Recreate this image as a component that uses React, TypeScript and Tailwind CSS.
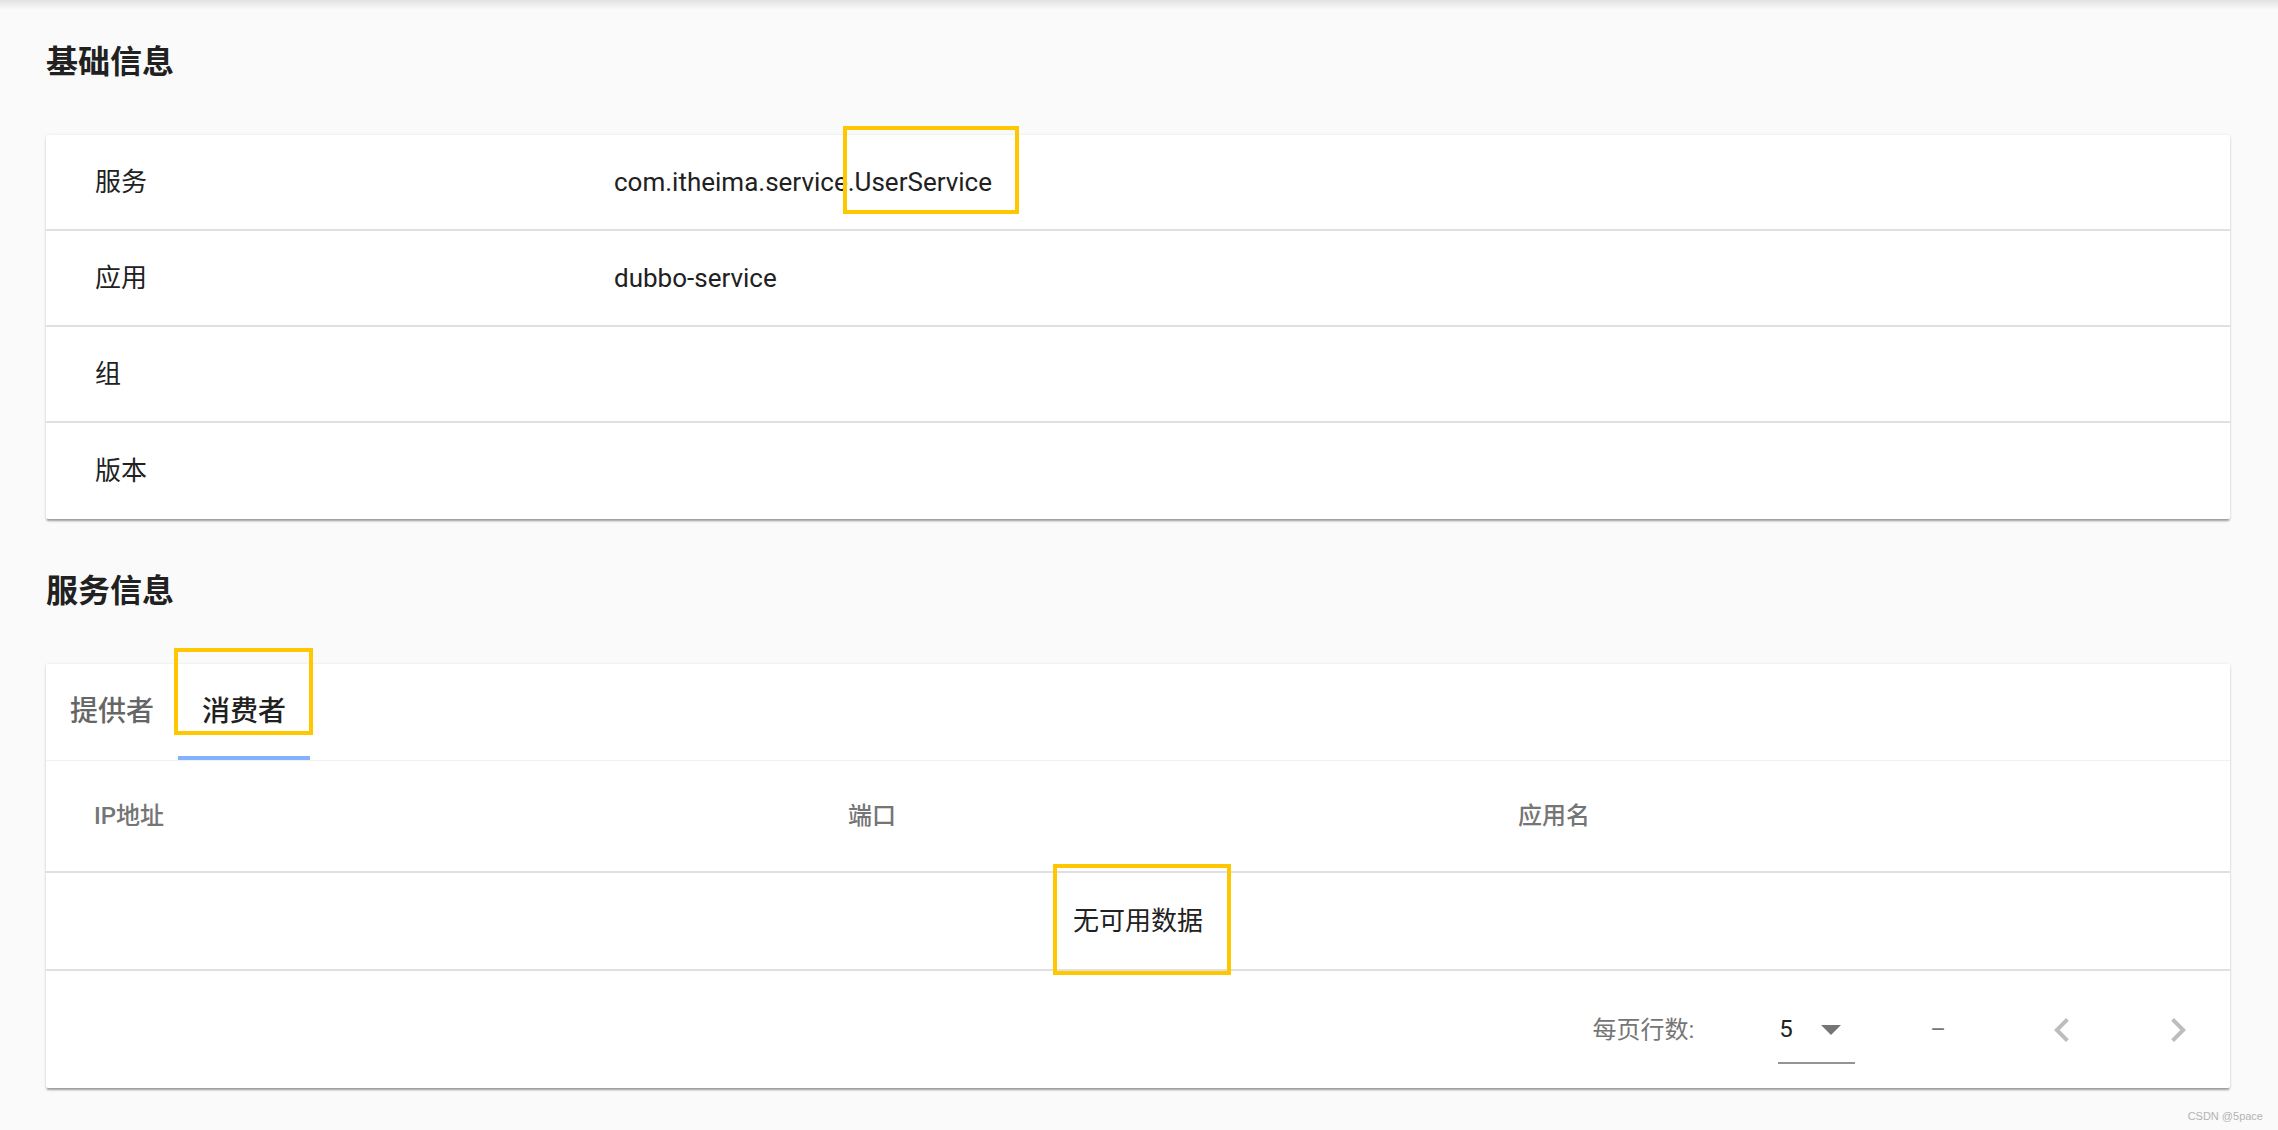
import React from "react"

const INFO_ROWS = [
  { label: "服务", value: "com.itheima.service.UserService" },
  { label: "应用", value: "dubbo-service" },
  { label: "组", value: "" },
  { label: "版本", value: "" },
]

const TABS = ["提供者", "消费者"]

const cardShadow =
  "shadow-[0_3px_2px_-1px_rgba(0,0,0,0.28),0_2px_3px_0_rgba(0,0,0,0.12),0_0_3px_0_rgba(0,0,0,0.08)]"

const ChevronLeft = () => (
  <svg width="48" height="48" viewBox="0 0 24 24" fill="#bdbdbd">
    <path d="M15.41 7.41L14 6l-6 6 6 6 1.41-1.41L10.83 12z" />
  </svg>
)

const ChevronRight = () => (
  <svg width="48" height="48" viewBox="0 0 24 24" fill="#bdbdbd">
    <path d="M10 6L8.59 7.41 13.17 12l-4.58 4.59L10 18l6-6z" />
  </svg>
)

const ArrowDrop = () => (
  <svg width="48" height="48" viewBox="0 0 24 24" fill="#757575">
    <path d="M7 10l5 5 5-5z" />
  </svg>
)

// yellow annotation frames drawn over the screenshot
const Mark = ({ className }: { className: string }) => (
  <div className={`absolute border-[4px] border-[#ffc700] pointer-events-none ${className}`} />
)

const BasicInfo = () => {
  return (
    <div className={`bg-white rounded-[2px] ${cardShadow}`}>
      {INFO_ROWS.map((row, index) => (
        <div
          key={row.label}
          className={`flex items-center h-[96px] text-[26px] text-[#212121] ${
            index < INFO_ROWS.length - 1 ? "border-b-2 border-[#e0e0e0]" : ""
          }`}
        >
          <div className="w-[568px] pl-[49px]">{row.label}</div>
          <div>{row.value}</div>
        </div>
      ))}
    </div>
  )
}

const ServiceInfo = () => {
  return (
    <div className={`bg-white rounded-[2px] ${cardShadow}`}>
      <div className="flex h-[96px]">
        {TABS.map((tab, index) => (
          <div
            key={tab}
            className={`relative w-[132px] flex items-center justify-center text-[28px] font-medium ${
              index === 1 ? "text-[#212121]" : "text-[#666666]"
            }`}
          >
            {tab}
            {index === 1 && (
              <div className="absolute left-0 right-0 bottom-0 h-[4px] bg-[#82b1ff]" />
            )}
          </div>
        ))}
      </div>

      <div className="border-t border-[#f2f2f2]">
        <div className="flex items-center h-[112px] border-b-2 border-[#e0e0e0] text-[24px] font-medium text-[#757575]">
          <div className="w-[754px] pl-[48px]">IP地址</div>
          <div className="w-[670px] pl-[48px]">端口</div>
          <div className="pl-[48px]">应用名</div>
        </div>
        <div className="flex items-center justify-center h-[98px] border-b-2 border-[#e0e0e0] text-[26px] text-[#212121]">
          无可用数据
        </div>
        <div className="flex items-center justify-end h-[117px] pr-[28px] text-[24px] text-[#757575]">
          <span>每页行数:</span>
          <div className="ml-[84px] w-[77px] h-[58px] flex items-center border-b-2 border-[#949494] mt-[10px]">
            <span className="text-[#212121] ml-[1px] mt-[-10px]">5</span>
            <div className="ml-auto mt-[-10px] flex">
              <ArrowDrop />
            </div>
          </div>
          <span className="ml-[75px] mr-[92px]">–</span>
          <ChevronLeft />
          <div className="w-[68px]" />
          <ChevronRight />
        </div>
      </div>
    </div>
  )
}

export default function App() {
  return (
    <div className="relative w-full min-h-[1130px] bg-[#fafafa] font-['Roboto','Noto_Sans_CJK_SC',sans-serif] overflow-hidden">
      <div className="h-[10px] bg-gradient-to-b from-[#e2e2e2] to-[#fafafa]" />
      <div className="pl-[46px] pr-[48px]">
        <h1 className="mt-[32px] h-[40px] leading-[40px] text-[32px] font-bold text-[#212121]">
          基础信息
        </h1>
        <div className="mt-[53px]">
          <BasicInfo />
        </div>
        <h2 className="mt-[52px] h-[40px] leading-[40px] text-[32px] font-bold text-[#212121]">
          服务信息
        </h2>
        <div className="mt-[53px]">
          <ServiceInfo />
        </div>
      </div>

      <Mark className="left-[843px] top-[126px] w-[176px] h-[88px]" />
      <Mark className="left-[174px] top-[648px] w-[139px] h-[87px]" />
      <Mark className="left-[1053px] top-[864px] w-[178px] h-[111px]" />

      <div className="absolute right-[15px] top-[1108px] text-[11px] text-[#b3b3b3] font-['Liberation_Sans',sans-serif]">
        CSDN @5pace
      </div>
    </div>
  )
}
